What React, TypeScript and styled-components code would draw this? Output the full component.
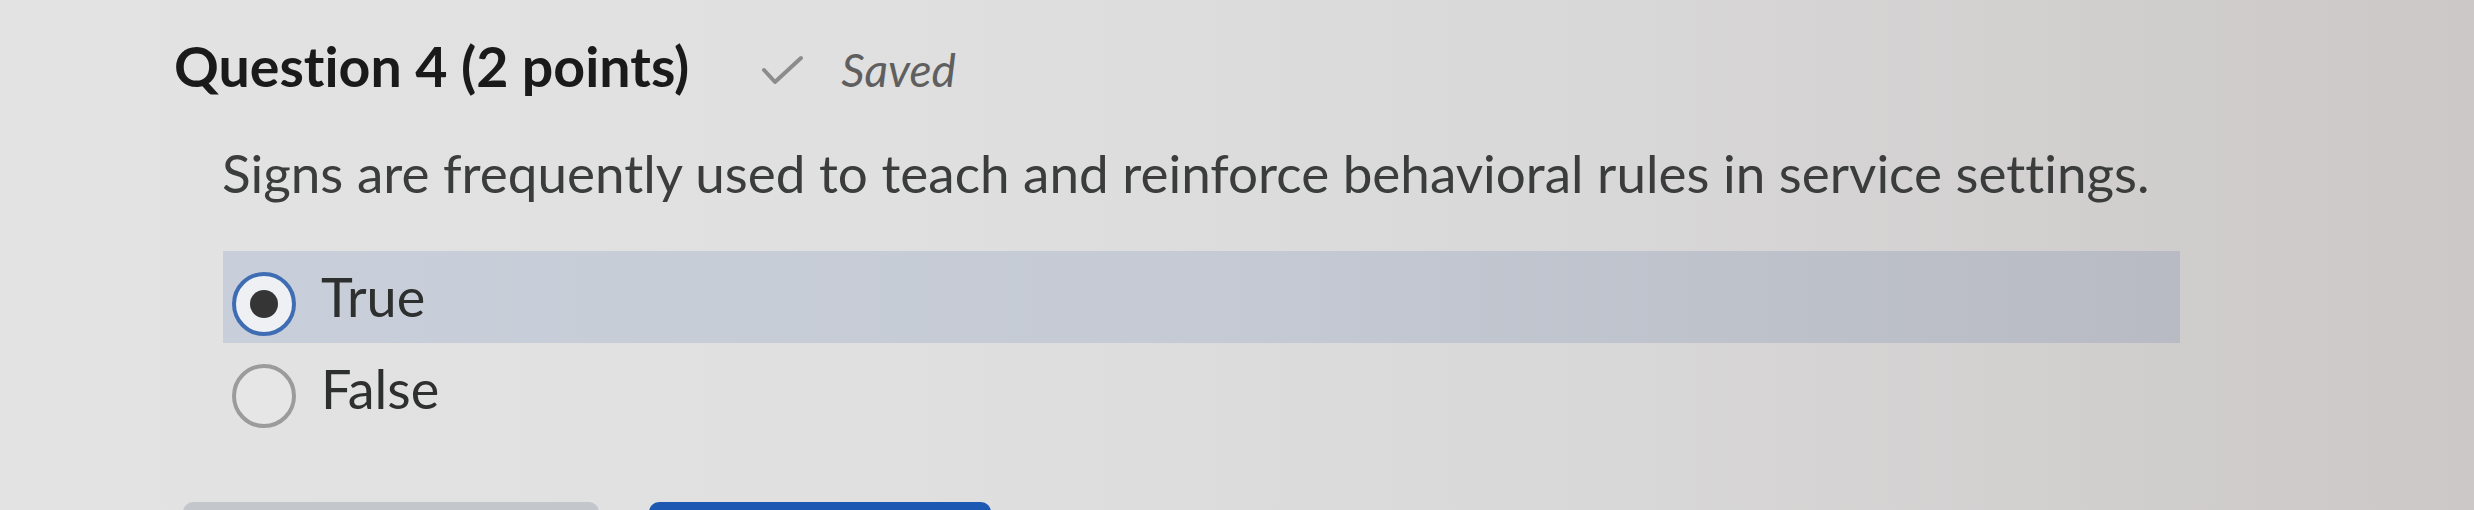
import React, { useState } from 'react'
import styled, { createGlobalStyle } from 'styled-components'

const GlobalStyle = createGlobalStyle`
  html, body {
    margin: 0;
    padding: 0;
  }
  body {
    width: 2474px;
    height: 510px;
    overflow: hidden;
    font-family: Lato, "Open Sans", "Liberation Sans", sans-serif;
    font-variant-ligatures: none;
    background: linear-gradient(90deg, #e3e3e3 0%, #e0e0e0 35%, #d9d8d8 65%, #cbc8c7 100%);
  }
`

const Page = styled.div`
  display: flex;
  flex-direction: column;
  padding: 32px 0 0 174px;
  box-sizing: border-box;
  height: 510px;
  overflow: hidden;
`

const Header = styled.div`
  display: flex;
  align-items: center;
  height: 67px;
`

const Title = styled.h2`
  margin: 0;
  font-size: 55.5px;
  line-height: 67px;
  font-weight: 700;
  color: #1a1a1a;
`

const SavedTag = styled.div`
  display: flex;
  align-items: center;
  margin-left: 72px;
  gap: 38px;
  color: #5f5f5f;
  font-size: 46px;
  line-height: 55px;
  font-style: italic;
  padding-top: 8px;
`

const QuestionText = styled.p`
  margin: 42px 0 0 48px;
  font-size: 53px;
  line-height: 63.6px;
  color: #3b3c3c;
`

const AnswerList = styled.div`
  display: flex;
  flex-direction: column;
  margin: 46px 0 0 49px;
  width: 1957px;
`

const AnswerRow = styled.label<{ $selected: boolean }>`
  display: flex;
  align-items: center;
  height: 92px;
  padding-left: 9px;
  box-sizing: border-box;
  gap: 25px;
  cursor: pointer;
  background: ${p => (p.$selected ? 'linear-gradient(90deg, #c9cfda 0%, #c5cad4 50%, #b8bbc4 100%)' : 'transparent')};
`

const Radio = styled.span<{ $checked: boolean }>`
  display: flex;
  align-items: center;
  justify-content: center;
  width: 64px;
  height: 64px;
  margin-top: 14px;
  box-sizing: border-box;
  border-radius: 50%;
  border: 4px solid ${p => (p.$checked ? '#3f6db3' : '#9b9b9b')};
  background: ${p => (p.$checked ? '#eef0f3' : '#e6e6e6')};
  flex-shrink: 0;
  &::after {
    content: '';
    display: ${p => (p.$checked ? 'block' : 'none')};
    width: 28px;
    height: 28px;
    border-radius: 50%;
    background: #353535;
  }
`

const AnswerText = styled.span`
  font-size: 54px;
  line-height: 65px;
  color: #2e2f2f;
`

const Footer = styled.div`
  display: flex;
  gap: 50px;
  margin: 67px 0 0 9px;
`

const Button = styled.button<{ $primary?: boolean }>`
  height: 70px;
  border: none;
  border-radius: 10px 10px 0 0;
  background: ${p => (p.$primary ? '#1d58b3' : '#c3c6cb')};
  width: ${p => (p.$primary ? '342px' : '416px')};
  padding: 0;
`

const CheckIcon = () => (
  <svg width="42" height="30" viewBox="0 0 42 30">
    <polyline points="3,15 14,27 40,3" fill="none" stroke="#8c8c8c" strokeWidth="4" strokeLinecap="round" strokeLinejoin="round" />
  </svg>
)

const options = ['True', 'False']

const App = () => {
  const [answer, setAnswer] = useState('True')
  return (
    <>
      <GlobalStyle />
      <Page>
        <Header>
          <Title>Question 4 (2 points)</Title>
          <SavedTag>
            <CheckIcon />
            <span>Saved</span>
          </SavedTag>
        </Header>
        <QuestionText>Signs are frequently used to teach and reinforce behavioral rules in service settings.</QuestionText>
        <AnswerList>
          {options.map(opt => (
            <AnswerRow key={opt} $selected={answer == opt} onClick={() => setAnswer(opt)}>
              <Radio $checked={answer == opt} />
              <AnswerText>{opt}</AnswerText>
            </AnswerRow>
          ))}
        </AnswerList>
        <Footer>
          <Button />
          <Button $primary />
        </Footer>
      </Page>
    </>
  )
}

export default App
